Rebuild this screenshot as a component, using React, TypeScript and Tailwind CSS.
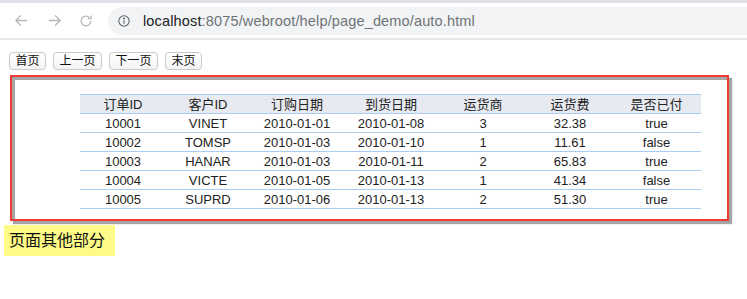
import React from "react";

const rows = [
  ["10001", "VINET", "2010-01-01", "2010-01-08", "3", "32.38", "true"],
  ["10002", "TOMSP", "2010-01-03", "2010-01-10", "1", "11.61", "false"],
  ["10003", "HANAR", "2010-01-03", "2010-01-11", "2", "65.83", "true"],
  ["10004", "VICTE", "2010-01-05", "2010-01-13", "1", "41.34", "false"],
  ["10005", "SUPRD", "2010-01-06", "2010-01-13", "2", "51.30", "true"],
];
const heads = ["订单ID", "客户ID", "订购日期", "到货日期", "运货商", "运货费", "是否已付"];
const widths = ["w-[86px]", "w-[84px]", "w-[94px]", "w-[94px]", "w-[90px]", "w-[84px]", "w-[89px]"];

export default function App() {
  return (
    <div className="w-[747px] h-[299px] bg-white overflow-hidden text-[#222]" style={{ fontFamily: '"Liberation Sans", "Noto Sans CJK SC", sans-serif' }}>
      {/* browser toolbar */}
      <div className="h-[3px] bg-[#dee1e6]" />
      <div className="h-[35px] flex items-center bg-white">
        <div className="w-[108px] flex items-center text-[#b4b6b9]">
          <svg className="ml-[14px]" width="15" height="15" viewBox="0 0 16 16" fill="none" stroke="currentColor" strokeWidth="1.4">
            <path d="M14 8H2M7.5 2.5L2 8l5.5 5.5" />
          </svg>
          <svg className="ml-[18px]" width="15" height="15" viewBox="0 0 16 16" fill="none" stroke="currentColor" strokeWidth="1.4">
            <path d="M2 8h12M8.5 2.5L14 8l-5.5 5.5" />
          </svg>
          <svg className="ml-[17px]" width="14" height="14" viewBox="0 0 16 16" fill="none" stroke="currentColor" strokeWidth="1.4">
            <path d="M13.5 8a5.5 5.5 0 1 1-1.6-3.9" />
            <path d="M13.8 1.8v3.6h-3.6" />
          </svg>
        </div>
        <div className="flex-1 h-[28px] rounded-l-full bg-[#f1f3f4] flex items-center">
          <svg className="ml-[10px]" width="12" height="12" viewBox="0 0 12 12" fill="none" stroke="#5f6368" strokeWidth="1.1">
            <circle cx="6" cy="6" r="5.2" />
            <path d="M6 5.2v3.6" />
            <circle cx="6" cy="3.4" r="0.45" fill="#5f6368" />
          </svg>
          <span className="ml-[13px] text-[14.5px] leading-none tracking-[0.15px] mt-[1px]">
            <span className="text-[#202124]">localhost</span>
            <span className="text-[#6f7378]">:8075/webroot/help/page_demo/auto.html</span>
          </span>
        </div>
      </div>
      <div className="h-[2px] bg-[#e6e7e9]" />

      {/* page */}
      <div className="pt-[12px] pl-[9px] flex gap-[7px]">
        {["首页", "上一页", "下一页", "末页"].map((b, i) => (
          <div
            key={b}
            className={`h-[18px] ${i === 0 || i === 3 ? "w-[37px]" : "w-[49px]"} border border-[#c9c9c9] rounded-[4px] bg-gradient-to-b from-white to-[#f4f4f4] flex items-center justify-center text-[12px] leading-none text-[#111]`}
          >
            {b}
          </div>
        ))}
      </div>

      <div className="mt-[5px] ml-[10px] w-[719px] h-[146px] border-2 border-[#f03a35] shadow-[3px_3px_1px_#a4a4a4]">
        <div className="h-full border-l-[3px] border-t-[3px] border-[#a5a5a5] pl-[65px] pt-[14px]">
          <div className="w-[621px] border-t border-[#a9cdf3]">
            <div className="flex h-[19px] bg-[#e7eaf1] border-b border-[#a9cdf3] text-[13px] items-center">
              {heads.map((h, i) => (
                <div key={h} className={`${widths[i]} text-center leading-none`}>{h}</div>
              ))}
            </div>
            {rows.map((r) => (
              <div key={r[0]} className="flex h-[19px] border-b border-[#a9cdf3] text-[13px] items-center">
                {r.map((c, i) => (
                  <div key={i} className={`${widths[i]} text-center leading-none`}>{c}</div>
                ))}
              </div>
            ))}
          </div>
        </div>
      </div>

      <div className="mt-[4px] ml-[4px] w-[111px] h-[31px] bg-[#fffb86] flex items-center pl-[5px] text-[16px] text-[#111]">
        页面其他部分
      </div>
    </div>
  );
}
